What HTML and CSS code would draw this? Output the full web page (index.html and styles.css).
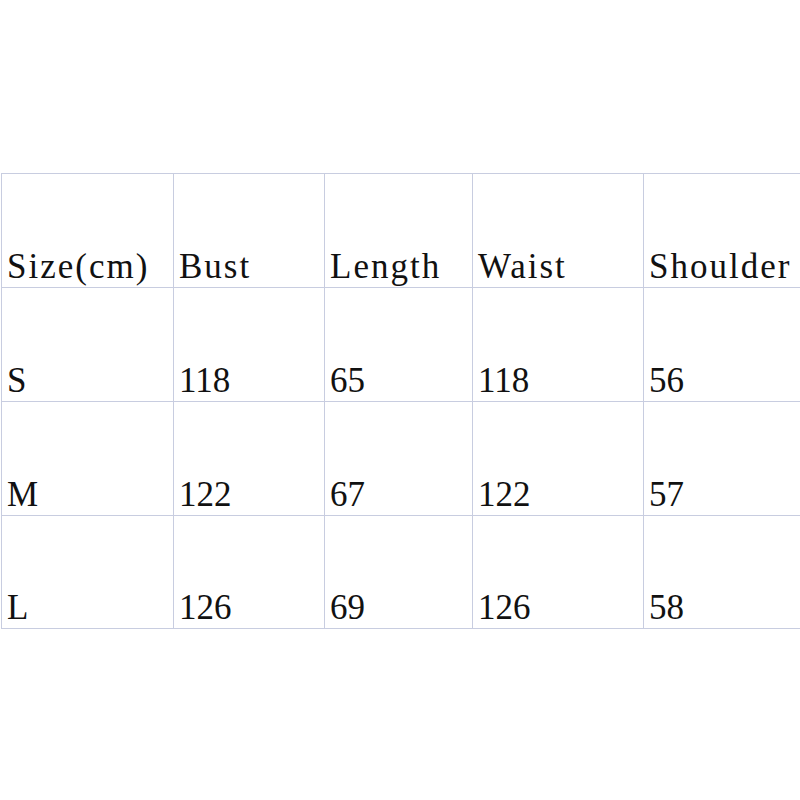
FILE: index.html
```html
<!DOCTYPE html>
<html>
<head>
<meta charset="utf-8">
<link rel="stylesheet" href="styles.css">
</head>
<body>
<div class="page">
<table class="sizes">
<colgroup>
<col class="c1"><col class="c2"><col class="c3"><col class="c4"><col class="c5">
</colgroup>
<tr class="head"><td>Size(cm)</td><td>Bust</td><td>Length</td><td>Waist</td><td>Shoulder</td></tr>
<tr><td>S</td><td>118</td><td>65</td><td>118</td><td>56</td></tr>
<tr><td>M</td><td>122</td><td>67</td><td>122</td><td>57</td></tr>
<tr><td>L</td><td>126</td><td>69</td><td>126</td><td>58</td></tr>
</table>
</div>
</body>
</html>
```
FILE: styles.css
```css
html, body {
  margin: 0;
  padding: 0;
  background: #fff;
  overflow: hidden;
}
.page {
  padding: 173px 0 0 1px;
}
.sizes {
  border-collapse: collapse;
  table-layout: fixed;
  width: 799px;
  font-family: "Liberation Serif", serif;
  font-size: 35px;
  color: #111;
}
.c1 { width: 172px; }
.c2 { width: 151px; }
.c3 { width: 148px; }
.c4 { width: 171px; }
.c5 { width: 157px; }
.sizes td {
  border: 1px solid #c8cde0;
  height: 114px;
  box-sizing: border-box;
  vertical-align: bottom;
  padding: 0 0 3px 5px;
  line-height: 35px;
  white-space: nowrap;
  overflow: visible;
}
.sizes tr:last-child td {
  height: 113px;
}
.sizes td:last-child {
  border-right: none;
}
.head td {
  letter-spacing: 2px;
}
```
